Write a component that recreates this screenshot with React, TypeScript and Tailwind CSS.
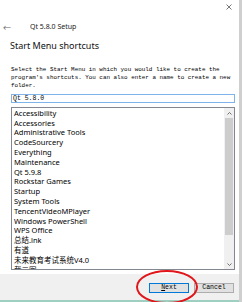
import React from "react";

const items = [
  "Accessibility",
  "Accessories",
  "Administrative Tools",
  "CodeSourcery",
  "Everything",
  "Maintenance",
  "Qt 5.9.8",
  "Rockstar Games",
  "Startup",
  "System Tools",
  "TencentVideoMPlayer",
  "Windows PowerShell",
  "WPS Office",
  "总结.lnk",
  "有道",
  "未来教育考试系统V4.0",
  "截二图",
];

const sans = "font-['Segoe_UI','Noto_Sans','Noto_Sans_CJK_SC',sans-serif]";
const mono = "font-['Liberation_Mono','Noto_Sans_CJK_SC',monospace]";

export default function App() {
  return (
    <div className="relative flex h-[302px] w-[242px] overflow-hidden bg-white">
      <div className="flex w-[239px] flex-col">
        {/* title bar */}
        <div className="flex h-[16px] items-center justify-end pr-[7px]">
          <svg width="6" height="6" viewBox="0 0 6 6" className="text-[#555]">
            <path d="M0.5 0.5 L5.5 5.5 M5.5 0.5 L0.5 5.5" stroke="currentColor" strokeWidth="0.8" />
          </svg>
        </div>
        <div className={`flex h-[28px] items-center ${sans} text-[7px] text-[#222]`}>
          <span className="w-[30px] pl-[3px] text-[8px] text-[#666]">←</span>
          <span>Qt 5.8.0 Setup</span>
        </div>
        <div className={`pl-[10px] ${sans} text-[9px] leading-[12px] text-[#111]`}>Start Menu shortcuts</div>

        {/* page body */}
        <div className="flex flex-1 flex-col pl-[11px] pr-[4px] pt-[14px]">
          <p className={`${mono} text-[5.9px] leading-[8px] text-black`}>
            Select the Start Menu in which you would like to create the
            <br />
            program's shortcuts. You can also enter a name to create a new
            <br />
            folder.
          </p>
          <div className={`mt-[4px] flex h-[9px] items-center border border-[#7eb4ea] px-[1px] ${mono} text-[6.5px] text-black`}>
            Qt 5.8.0
          </div>
          <div className="mt-[4px] flex h-[163px] border border-[#828790]">
            <ul className={`flex-1 overflow-hidden pl-[2px] pt-[0.5px] ${sans} text-[7.5px] leading-[9.8px] text-black`}>
              {items.map((it) => (
                <li key={it} className="whitespace-nowrap">
                  {it}
                </li>
              ))}
            </ul>
            <div className="flex w-[10px] flex-col bg-[#f0f0f0]">
              <div className="flex h-[10px] items-center justify-center">
                <svg width="5" height="3" viewBox="0 0 5 3">
                  <path d="M0.5 2.5 L2.5 0.5 L4.5 2.5" fill="none" stroke="#606060" strokeWidth="0.9" />
                </svg>
              </div>
              <div className="mx-[1px] h-[117px] bg-[#cdcdcd]" />
              <div className="flex-1" />
              <div className="flex h-[10px] items-center justify-center">
                <svg width="5" height="3" viewBox="0 0 5 3">
                  <path d="M0.5 0.5 L2.5 2.5 L4.5 0.5" fill="none" stroke="#606060" strokeWidth="0.9" />
                </svg>
              </div>
            </div>
          </div>
        </div>

        {/* footer */}
        <div className="mt-[4px] flex h-[28px] items-center justify-end gap-[5px] bg-[#f0f0f0] pr-[5px] pt-[2px]">
          <button className={`flex h-[10px] w-[40px] items-center justify-center border border-[#0078d7] bg-[#e1e1e1] ${mono} text-[6.5px] text-black`}>
            <span className="underline">N</span>ext
          </button>
          <button className={`flex h-[10px] w-[40px] items-center justify-center border border-[#adadad] bg-[#e1e1e1] ${mono} text-[6.5px] text-black`}>
            Cancel
          </button>
        </div>
        <div className="h-[2px] bg-[#9fcfc0]" />
      </div>
      <div className="w-[3px] bg-[#cfcfcf]" />

      {/* red annotation ellipse */}
      <svg className="pointer-events-none absolute left-[135px] top-[268px]" width="64" height="36" viewBox="0 0 64 36">
        <ellipse cx="32" cy="19" rx="30" ry="16" fill="none" stroke="#e0161b" strokeWidth="2" />
      </svg>
    </div>
  );
}
